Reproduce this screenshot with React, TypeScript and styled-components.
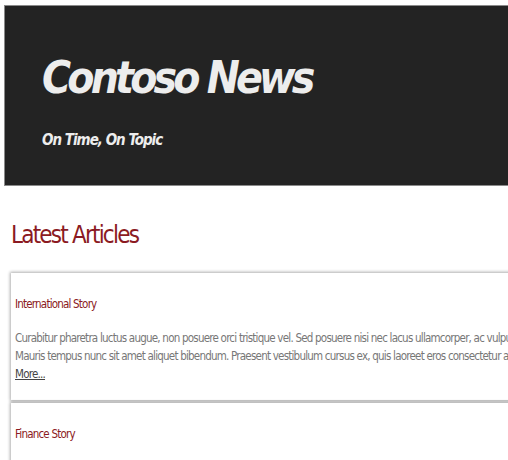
import React from "react";
import styled, { createGlobalStyle } from "styled-components";

const Global = createGlobalStyle`
  html, body { margin: 0; padding: 0; background: #fff; overflow: hidden; }
  body { font-family: "DejaVu Sans Condensed", "DejaVu Sans", sans-serif; }
`;

const Page = styled.div`
  width: 760px;
  padding: 5px 0 0 4px;
`;

const Header = styled.header`
  background: #232323;
  border: 1px solid #8a8a8a;
  border-right: none;
  height: 179px;
  padding: 0 0 0 37px;
  display: flex;
  flex-direction: column;
  box-sizing: content-box;
`;

const Title = styled.h1`
  margin: 45px 0 0;
  font-style: italic;
  font-weight: bold;
  font-size: 44px;
  line-height: 54px;
  letter-spacing: -3.8px;
  color: #ededed;
`;

const Tagline = styled.p`
  margin: 26px 0 0;
  font-style: italic;
  font-weight: bold;
  font-size: 15px;
  letter-spacing: -1px;
  color: #ededed;
`;

const Main = styled.main`
  padding: 0 0 0 7px;
`;

const Heading = styled.h2`
  margin: 34px 0 23px;
  font-weight: normal;
  font-size: 24px;
  line-height: 30px;
  letter-spacing: -1.8px;
  color: #8b1a22;
`;

const Card = styled.article`
  background: #fff;
  margin: 0 0 3px 0;
  box-shadow: 0 0 3px 1px rgba(0, 0, 0, 0.32);
  padding: 22px 0 17px 4px;
`;

const CardTitle = styled.h3`
  margin: 0 0 16px;
  font-weight: normal;
  font-size: 11.5px;
  line-height: 18px;
  letter-spacing: -0.8px;
  color: #8b1a22;
`;

const Body = styled.p`
  margin: 0;
  font-size: 11.5px;
  line-height: 18px;
  letter-spacing: -0.78px;
  color: #777;
  white-space: nowrap;
`;

const MoreLine = styled.p`
  margin: 0;
  font-size: 11.5px;
  line-height: 18px;
  letter-spacing: -0.78px;
`;

const More = styled.a`
  color: #444;
  text-decoration: underline;
`;

const articles = [
  {
    title: "International Story",
    lines: [
      "Curabitur pharetra luctus augue, non posuere orci tristique vel. Sed posuere nisi nec lacus ullamcorper, ac vulputate nibh dictum.",
      "Mauris tempus nunc sit amet aliquet bibendum. Praesent vestibulum cursus ex, quis laoreet eros consectetur ac.",
    ],
  },
  {
    title: "Finance Story",
    lines: [
      "Curabitur pharetra luctus augue, non posuere orci tristique vel. Sed posuere nisi nec lacus ullamcorper, ac vulputate nibh dictum.",
      "Mauris tempus nunc sit amet aliquet bibendum. Praesent vestibulum cursus ex, quis laoreet eros consectetur ac.",
    ],
  },
];

export default function App() {
  return (
    <>
      <Global />
      <Page>
        <Header>
          <Title>Contoso News</Title>
          <Tagline>On Time, On Topic</Tagline>
        </Header>
        <Main>
          <Heading>Latest Articles</Heading>
          {articles.map((a) => (
            <Card key={a.title}>
              <CardTitle>{a.title}</CardTitle>
              {a.lines.map((l) => (
                <Body key={l}>{l}</Body>
              ))}
              <MoreLine>
                <More href="#">More...</More>
              </MoreLine>
            </Card>
          ))}
        </Main>
      </Page>
    </>
  );
}
